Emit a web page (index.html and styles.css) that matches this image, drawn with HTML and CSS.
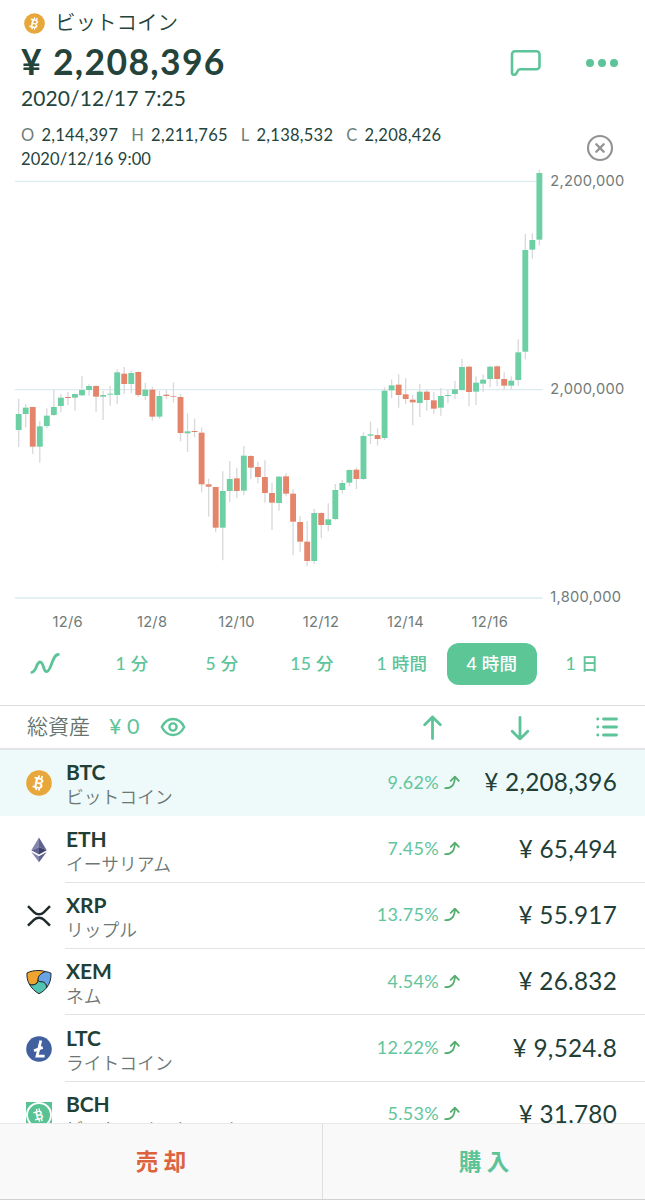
FILE: index.html
```html
<!DOCTYPE html>
<html lang="ja">
<head>
  <meta charset="UTF-8">
  <title>ビットコイン · チャート</title>
  <link rel="stylesheet" href="styles.css">
</head>
<body>

<svg width="0" height="0" class="defs">
  <symbol id="btc" viewBox="0 0 26 26">
    <circle cx="13" cy="13" r="12.8" fill="#e8a73a"/>
    <g transform="rotate(13 13 13)" fill="#fff" stroke="#fff">
      <text x="8.2" y="18.6" class="coin-letter" stroke="none">B</text>
      <path d="M11.500 5.500v3M14.500 5.500v3M11.500 17.500v3M14.500 17.500v3M7.500 8.700h3M7.500 17.700h3" stroke-width="1.700"/>
    </g>
  </symbol>
  <symbol id="rise" viewBox="0 0 16 15">
    <path d="M1.200 13.200C7.500 13.400 10.700 10 10.900 2M6.700 5.800l4.200-4.200 3.900 4.200" fill="none" stroke="#55ad70" stroke-width="1.800" stroke-linecap="round" stroke-linejoin="round"/>
  </symbol>
</svg>

<header class="head">
  <div class="head-main">
    <div class="name"><svg class="name-coin"><use href="#btc"/></svg><span>ビットコイン</span></div>
    <div class="price">¥ 2,208,396</div>
    <div class="now">2020/12/17 7:25</div>
    <div class="ohlc">
      <span><i>O</i>2,144,397</span>
      <span><i>H</i>2,211,765</span>
      <span><i>L</i>2,138,532</span>
      <span><i>C</i>2,208,426</span>
    </div>
    <div class="candle-time">2020/12/16 9:00</div>
  </div>
  <div class="head-side">
    <div class="actions">
      <svg width="33" height="30" viewBox="0 0 33 30" fill="none" stroke="#5dc49a" stroke-width="2.600" stroke-linejoin="round">
        <path d="M5 3.300h21.500a3 3 0 0 1 3 3v12a3 3 0 0 1-3 3H10c-1.800 0-2.100 1-2.700 2.400-.8 2-2 3.100-3.600 3.100-1.100 0-1.700-.8-1.700-2V6.300a3 3 0 0 1 3-3z"/>
      </svg>
      <svg width="34" height="30" viewBox="0 0 34 30" fill="#5dc49a">
        <circle cx="5" cy="15" r="4"/><circle cx="17" cy="15" r="4"/><circle cx="29" cy="15" r="4"/>
      </svg>
    </div>
    <svg class="close" width="28" height="28" viewBox="0 0 28 28" fill="none" stroke="#929292" stroke-width="2.100">
      <circle cx="14" cy="14" r="12"/>
      <path d="M10.300 10.300l7.400 7.400M17.700 10.300l-7.400 7.400" stroke-width="2.300" stroke-linecap="round"/>
    </svg>
  </div>
</header>

<svg id="chart" class="chart" viewBox="0 30 1935 1410"></svg>

<nav class="spans">
  <a class="span-line">
    <svg width="32" height="24" viewBox="0 0 32 24" fill="none" stroke="#5dc49a" stroke-width="2.800" stroke-linecap="round">
      <path d="M1.800 20.300c5-.4 4.300-10.300 8.200-10.300 4 0 3 9.600 6.600 9.600C21.300 19.600 21.800 3 28.300 2.500"/>
    </svg>
  </a>
  <a>1 分</a>
  <a>5 分</a>
  <a>15 分</a>
  <a>1 時間</a>
  <a class="active">4 時間</a>
  <a>1 日</a>
</nav>

<section class="assets">
  <span class="assets-label">総資産</span>
  <span class="assets-value">¥ 0</span>
  <svg class="eye" width="26" height="20" viewBox="0 0 26 20" fill="none" stroke="#5dc49a" stroke-width="2.400">
    <path d="M1.800 10C4.300 5 8.300 2 13 2s8.700 3 11.200 8c-2.500 5-6.500 8-11.200 8S4.300 15 1.800 10z" stroke-linejoin="round"/>
    <circle cx="13" cy="10" r="3.600"/>
  </svg>
  <div class="sorts">
    <svg width="20" height="26" viewBox="0 0 20 26"><path d="M10.500 24.500V3M2.700 10.800L10.500 3l7.800 7.800"/></svg>
    <svg width="20" height="26" viewBox="0 0 20 26"><path d="M10 3.500V25M2.200 17.200L10 25l7.800-7.800"/></svg>
    <svg width="24" height="26" viewBox="0 0 24 26"><path d="M8.500 5h13M8.500 13h13M8.500 21h13M2.700 5h.1M2.700 13h.1M2.700 21h.1"/></svg>
  </div>
</section>

<main class="coins">
  <div class="coin selected">
    <svg class="logo"><use href="#btc"/></svg>
    <div class="coin-body">
      <div class="coin-name"><b>BTC</b><small>ビットコイン</small></div>
      <span class="pct">9.62%</span><svg class="rise"><use href="#rise"/></svg>
      <span class="rate">¥ 2,208,396</span>
    </div>
  </div>
  <div class="coin">
    <svg class="logo" viewBox="0 0 26 26">
      <path d="M13 .5L5.300 13.200 13 10z" fill="#8286ad"/>
      <path d="M13 .5l7.700 12.700L13 10z" fill="#5f628f"/>
      <path d="M5.300 13.200L13 10v7.500z" fill="#62648f"/>
      <path d="M20.700 13.200L13 10v7.500z" fill="#3f416f"/>
      <path d="M5.300 15l7.700 4.300v6z" fill="#8286ad"/>
      <path d="M20.700 15L13 19.300v6z" fill="#5f628f"/>
    </svg>
    <div class="coin-body">
      <div class="coin-name"><b>ETH</b><small>イーサリアム</small></div>
      <span class="pct">7.45%</span><svg class="rise"><use href="#rise"/></svg>
      <span class="rate">¥ 65,494</span>
    </div>
  </div>
  <div class="coin">
    <svg class="logo" viewBox="0 0 26 26" fill="none" stroke="#20292b" stroke-width="2.500">
      <path d="M2 3.200l6.200 6.100c2.700 2.600 6.900 2.600 9.600 0L24 3.200M2 22.700l6.200-6.100c2.700-2.600 6.900-2.600 9.600 0l6.200 6.100"/>
    </svg>
    <div class="coin-body">
      <div class="coin-name"><b>XRP</b><small>リップル</small></div>
      <span class="pct">13.75%</span><svg class="rise"><use href="#rise"/></svg>
      <span class="rate">¥ 55.917</span>
    </div>
  </div>
  <div class="coin">
    <svg class="logo" viewBox="0 0 26 26" stroke="#1d2a2c" stroke-width="1" stroke-linejoin="round">
      <path d="M13 1.500C8.500 1.500 4 2.200 1 4c-.3 4 .5 8 2.400 11.300 2 1.200 5.500 1 7.600-1.300 2-2.200.5-4.400 2-6.700 1.500-2.500 4.200-3.600 6.500-4.700-2-.7-4.200-1.100-6.500-1.100z" fill="#efa42f"/>
      <path d="M19.500 2.600c2 .4 4 .8 5.500 1.600.3 5.300-1.200 10.800-4.600 14.800.5-3.500-1.800-6.200-5.200-6.200-1.500 0-2.700-.5-3.100-1.600-.2-1.700.3-3.200 1.200-4.500 1.500-2.200 4-3.200 6.200-4.100z" fill="#69a3e4"/>
      <path d="M3.400 15.300C5.500 19 9 22.700 13 24.700c2.800-1.300 5.300-3.300 7.400-5.700.5-3.500-1.800-6.200-5.200-6.200-1.500 0-2.700-.5-3.100-1.600 0 1.100-.3 2-1.100 2.800-2.100 2.300-5.600 2.500-7.600 1.300z" fill="#53c4b4"/>
    </svg>
    <div class="coin-body">
      <div class="coin-name"><b>XEM</b><small>ネム</small></div>
      <span class="pct">4.54%</span><svg class="rise"><use href="#rise"/></svg>
      <span class="rate">¥ 26.832</span>
    </div>
  </div>
  <div class="coin">
    <svg class="logo" viewBox="0 0 26 26">
      <circle cx="13" cy="13" r="12.800" fill="#40609f"/>
      <path d="M14.800 4.500L11 20.200h7.600M8 14.700l8.700-3.300" fill="none" stroke="#fff" stroke-width="2.800"/>
    </svg>
    <div class="coin-body">
      <div class="coin-name"><b>LTC</b><small>ライトコイン</small></div>
      <span class="pct">12.22%</span><svg class="rise"><use href="#rise"/></svg>
      <span class="rate">¥ 9,524.8</span>
    </div>
  </div>
  <div class="coin">
    <svg class="logo" viewBox="0 0 26 26">
      <path d="M0 0h26v26H0z" fill="#57c394"/>
      <circle cx="13" cy="13" r="12" fill="#57c394" stroke="#fff" stroke-width="2"/>
      <g transform="rotate(-14 13 13)" fill="#fff" stroke="#fff">
        <text x="9" y="17.500" class="bch-letter" stroke="none">B</text>
        <path d="M12 6.500v3M14.600 6.500v3M12 17v2.700M14.600 17v2.700M8 9.500h3M8 16.800h3" stroke-width="1.400"/>
      </g>
    </svg>
    <div class="coin-body">
      <div class="coin-name"><b>BCH</b><small>ビットコインキャッシュ</small></div>
      <span class="pct">5.53%</span><svg class="rise"><use href="#rise"/></svg>
      <span class="rate">¥ 31,780</span>
    </div>
  </div>
</main>

<footer class="trade">
  <a class="sell">売 却</a>
  <a class="buy">購 入</a>
</footer>

<script src="chart.js"></script>
</body>
</html>
```
FILE: styles.css
```css
*{box-sizing:border-box;}
body{margin:0;height:1200px;display:flex;flex-direction:column;overflow:hidden;background:#fff;color:#24443b;font-family:Lato,"Noto Sans CJK JP",sans-serif;}
.defs{position:absolute;}
svg{flex:none;display:block;}

.head{height:170px;flex:none;display:flex;justify-content:space-between;padding:8px 26px 0 21px;}
.name{display:flex;align-items:center;height:28px;font-size:20.5px;font-weight:350;}
.name span{padding-bottom:2px;}
.name-coin{width:21px;height:21px;margin:3px 10px 0 3px;}
.price{height:50px;line-height:52px;font-size:35.5px;font-weight:700;letter-spacing:1.35px;}
.now{height:25px;line-height:24px;font-size:21px;letter-spacing:.1px;}
.ohlc{display:flex;gap:13px;height:24px;line-height:25px;margin-top:12px;font-size:16.5px;letter-spacing:.25px;}
.ohlc i{font-style:normal;margin-right:7px;color:#6f7f79;}
.candle-time{height:24px;line-height:24px;font-size:16.5px;letter-spacing:.1px;}
.head-side{display:flex;flex-direction:column;align-items:flex-end;padding-top:40px;}
.actions{display:flex;gap:42px;}
.close{margin:56px 5px 0 0;}

.chart{width:645px;height:470px;}
.chart text{font-family:Inter,sans-serif;font-size:44px;letter-spacing:.8px;fill:#707b79;}

.spans{display:grid;grid-template-columns:87px repeat(6,90px);height:65px;padding-top:3px;}
.spans a{display:flex;align-items:center;justify-content:center;height:42px;padding-bottom:4px;color:#5dc49a;font-size:17.5px;font-weight:500;letter-spacing:.3px;border-radius:12px;}
.spans .span-line{padding:0 0 0 4px;}
.spans .active{background:#5dc697;color:#fff;}

.assets{display:flex;align-items:center;flex:none;height:45px;padding:0 26px 0 27px;border-top:1px solid #dcdfdf;border-bottom:2px solid #e2e5e5;}
.assets-label{padding-bottom:4px;font-size:21px;font-weight:350;color:#64736e;}
.assets-value{margin-left:19px;padding-bottom:2px;font-size:21.5px;color:#5dc49a;}
.eye{margin-left:21px;}
.sorts{display:flex;margin-left:auto;fill:none;stroke:#5dc49a;stroke-width:2.8;stroke-linecap:round;stroke-linejoin:round;}
.sorts svg + svg{margin-left:68px;}
.sorts svg:last-child{margin-left:65px;}

.coins{flex:1;min-height:0;overflow:hidden;}
.coin{display:flex;align-items:center;height:66.35px;padding-left:26px;}
.coin.selected{background:#eefafa;}
.logo{width:26px;height:26px;}
.coin-letter{font:700 14.500px Lato,sans-serif;}
.bch-letter{font:700 12px Lato,sans-serif;}
.coin-body{flex:1;display:flex;align-items:center;height:100%;margin-left:13px;padding:0 28px 0 1px;border-bottom:1.500px solid #e1e4e4;}
.selected .coin-body{border-color:transparent;}
.coin-name{flex:1;padding-top:4px;}
.coin-name b{display:block;font-size:21px;line-height:24px;font-weight:700;letter-spacing:-.1px;color:#1f4036;}
.coin-name small{display:block;height:25px;font-size:17.8px;line-height:26px;font-weight:350;color:#6c7774;white-space:nowrap;}
.pct{padding-bottom:2px;font-size:18px;letter-spacing:.3px;color:#62c59c;}
.rise{width:16px;height:15px;margin:0 0 1px 5px;}
.rate{width:157px;padding-bottom:2px;text-align:right;font-size:24.3px;letter-spacing:.25px;color:#223f37;}

.trade{display:flex;flex:none;height:77px;background:#f9f9f9;border-top:1px solid #e9e9e9;border-bottom:1px solid #d2d2d2;}
.trade a{flex:1;display:flex;align-items:center;justify-content:center;padding-bottom:3px;font-size:22.5px;font-weight:700;}
.trade .sell{color:#dc633e;border-right:1px solid #dedede;}
.trade .buy{color:#5dc49a;}
```
FILE: chart.js
```js
// [high, body top, body bottom, low, up] in chart units
const candles = [
  [716,762,810,861,1],[732,743,762,802,1],[740,741,860,882,0],[784,799,860,908,1],[745,767,798,805,1],
  [690,741,765,767,1],[703,713,738,757,1],[696,711,714,735,0],[701,702,713,752,1],[648,690,706,707,1],
  [673,678,690,707,1],[675,678,710,755,0],[692,705,710,780,1],[678,701,704,737,1],[628,637,705,733,1],
  [621,641,672,702,0],[632,639,672,700,1],[634,636,705,711,0],[668,689,708,719,1],[680,689,770,782,0],
  [692,708,770,776,1],[690,704,708,717,0],[667,708,710,728,0],[702,711,819,844,0],[760,814,820,876,1],
  [775,813,816,832,0],[802,818,973,997,0],[956,973,980,1070,0],[980,981,1103,1117,0],[934,993,1103,1201,1],
  [903,957,993,1026,1],[923,955,993,1014,0],[858,887,992,1006,1],[885,888,923,958,0],[905,921,951,970,0],
  [901,951,999,1028,0],[969,999,1028,1110,0],[948,950,1029,1052,1],[940,949,1001,1008,0],[988,1001,1085,1186,0],
  [1068,1086,1145,1176,0],[1083,1145,1203,1219,0],[1046,1059,1203,1212,1],[1057,1059,1095,1135,0],[1030,1078,1095,1114,1],
  [972,990,1077,1081,1],[960,969,990,1001,1],[928,930,968,979,1],[923,929,957,987,0],[817,828,957,960,1],
  [785,823,827,852,1],[805,825,837,857,0],[682,692,834,840,1],[658,676,691,714,1],[643,674,705,743,0],
  [655,703,717,732,0],[705,719,727,796,0],[672,695,729,771,1],[687,695,720,752,0],[695,721,746,761,0],
  [684,708,743,767,1],[690,705,708,729,1],[663,688,702,718,1],[597,621,690,692,1],[617,620,696,739,0],
  [649,668,695,735,1],[643,659,671,697,1],[617,620,657,682,1],[616,619,657,679,0],[637,657,677,689,0],
  [649,662,677,689,1],[538,577,660,677,1],[222,270,575,598,1],[220,240,269,296,1],[30,39,239,257,1]
];
const prices = [['2,200,000', 64], ['2,000,000', 689], ['1,800,000', 1314]];
const days = ['12/6', '12/8', '12/10', '12/12', '12/14', '12/16'];

let out = '';
prices.forEach(([label, y]) => {
  out += `<path d="M45 ${y}H1628" stroke="#dcebef" stroke-width="4"/>`;
  out += `<text x="1651" y="${y + 13}">${label}</text>`;
});
days.forEach((day, i) => {
  out += `<text x="${203 + i * 253.3}" y="1402" text-anchor="middle">${day}</text>`;
});
candles.forEach(([high, top, bottom, low, up], i) => {
  const x = 56 + i * 21.11;
  out += `<path d="M${x} ${high}V${low}" stroke="#d9d9dc" stroke-width="4"/>`;
  out += `<rect x="${x - 8.8}" y="${top}" width="17.6" height="${bottom - top}" fill="${up ? '#6dd0a5' : '#e4846b'}"/>`;
});
document.getElementById('chart').innerHTML = out;
```
